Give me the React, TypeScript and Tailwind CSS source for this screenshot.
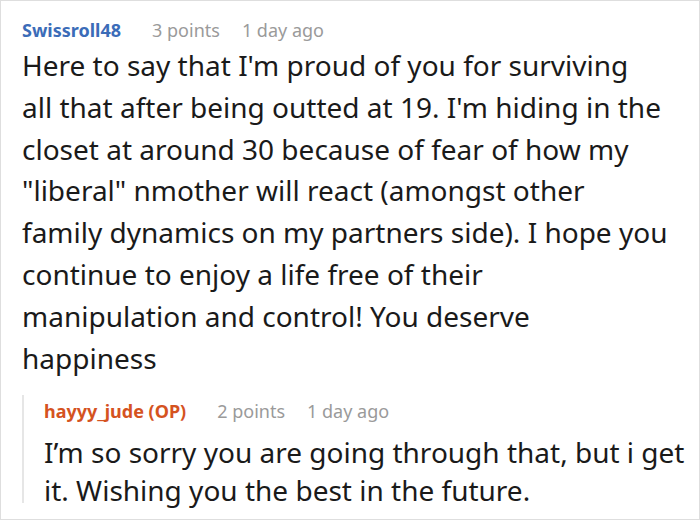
const Meta = ({ name, color, points, time }: { name: string; color: string; points: string; time: string }) => (
  <div className="flex items-baseline text-[18px] leading-[24px]">
    <span className={`font-bold ${color}`}>{name}</span>
    <span className="ml-[31px] text-[#9a9a9a]">{points}</span>
    <span className="ml-[22px] text-[#9a9a9a]">{time}</span>
  </div>
);

// line breaks kept as in the original layout
const commentLines = [
  'Here to say that I\'m proud of you for surviving',
  'all that after being outted at 19. I\'m hiding in the',
  'closet at around 30 because of fear of how my',
  '"liberal" nmother will react (amongst other',
  'family dynamics on my partners side). I hope you',
  'continue to enjoy a life free of their',
  'manipulation and control! You deserve',
  'happiness',
];

export default function App() {
  return (
    <div
      className="w-[700px] h-[520px] bg-white border border-[#dedede] overflow-hidden"
      style={{ fontFamily: '"Noto Sans", "Open Sans", sans-serif' }}
    >
      <div className="pl-[21px] pt-[17px]">
        <Meta name="Swissroll48" color="text-[#3b6cb8]" points="3 points" time="1 day ago" />
        <p className="mt-[3px] w-[676px] whitespace-nowrap text-[28px] leading-[41.8px] text-[#1a1a1a]">
          {commentLines.map((line, i) => (
            <span key={i} className="block">
              {line}
            </span>
          ))}
        </p>
        <div className="mt-[20px] flex">
          <div className="w-[2px] bg-[#e6e6e6] mt-[-4px] mb-[6px]" />
          <div className="pl-[20px]">
            <Meta name="hayyy_jude (OP)" color="text-[#d5531f]" points="2 points" time="1 day ago" />
            <p className="mt-[10px] w-[650px] text-[28px] leading-[38px] text-[#1a1a1a]">
              I’m so sorry you are going through that, but i get it. Wishing you the best in the future.
            </p>
          </div>
        </div>
      </div>
    </div>
  );
}
